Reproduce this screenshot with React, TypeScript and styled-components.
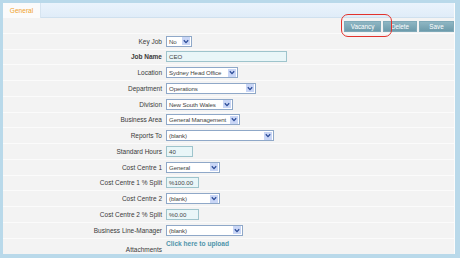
import styled, { createGlobalStyle } from "styled-components";

const GlobalStyle = createGlobalStyle`
  html, body {
    margin: 0;
    padding: 0;
    background: #b9d9ea;
  }
  body {
    font-family: "Liberation Sans", Arial, sans-serif;
  }
`;

const Frame = styled.div`
  width: 460px;
  height: 258px;
  box-sizing: border-box;
  padding: 3px 5px 4px 3px;
  background: #b9d9ea;
  position: relative;
`;

const Panel = styled.div`
  height: 100%;
  background: #f3f3f3;
  border-right: 1px solid #fcfcfc;
  box-sizing: border-box;
  display: flex;
  flex-direction: column;
  overflow: hidden;
`;

const TabStrip = styled.div`
  height: 14px;
  display: flex;
  background: linear-gradient(#eaf3fc, #e0ecf8);
  border-bottom: 1px solid #cfe0ee;
`;

const Tab = styled.div`
  width: 37px;
  height: 15px;
  background: #fbfbfb;
  color: #f0a22c;
  font-size: 6.6px;
  display: flex;
  align-items: center;
  justify-content: center;
  border-right: 1px solid #d6e4f0;
`;

const ButtonBar = styled.div`
  height: 15px;
  display: flex;
  justify-content: flex-end;
  align-items: flex-end;
  gap: 2px;
`;

const Button = styled.div<{ $w: number }>`
  width: ${(p) => p.$w}px;
  height: 9px;
  background: linear-gradient(#8fb6c3, #6d9bab);
  color: #fff;
  font-size: 6.3px;
  display: flex;
  align-items: center;
  justify-content: center;
  border: 1px solid #7fa9b8;
  box-sizing: content-box;
`;

const Rows = styled.div`
  display: flex;
  flex-direction: column;
  margin-top: 1px;
`;

const Row = styled.div<{ $tall?: boolean }>`
  display: grid;
  grid-template-columns: 159px 1fr;
  column-gap: 4px;
  height: ${(p) => (p.$tall ? "16.5px" : "15.75px")};
  align-items: center;
  border-top: 1px solid #fbfbfb;
  box-sizing: border-box;
`;

const Label = styled.div<{ $bold?: boolean; $bottom?: boolean }>`
  text-align: right;
  font-size: 6.5px;
  color: #3a3a3a;
  font-weight: ${(p) => (p.$bold ? "bold" : "normal")};
  align-self: ${(p) => (p.$bottom ? "end" : "center")};
  padding-bottom: ${(p) => (p.$bottom ? "1px" : "0")};
`;

const SelectBox = styled.div<{ $w: number }>`
  width: ${(p) => p.$w}px;
  height: 11px;
  box-sizing: border-box;
  border: 1px solid #8fa8c8;
  background: #fff;
  display: flex;
  align-items: center;
  justify-content: space-between;
  padding-left: 2px;
  font-size: 6.1px;
  letter-spacing: -0.1px;
  color: #444;
  white-space: nowrap;
  overflow: hidden;
`;

const Arrow = styled.div`
  flex: none;
  width: 8px;
  height: 8px;
  margin-right: 1px;
  background: #c9d6f6;
  display: flex;
  align-items: center;
  justify-content: center;
`;

const TextBox = styled.div<{ $w: number }>`
  width: ${(p) => p.$w}px;
  height: 11px;
  box-sizing: border-box;
  border: 1px solid #9ec4cc;
  background: #e9f6f8;
  display: flex;
  align-items: center;
  padding-left: 2px;
  font-size: 6.1px;
  color: #444;
`;

const UploadLink = styled.div`
  align-self: start;
  color: #4f95ab;
  font-weight: bold;
  font-size: 6.6px;
  padding-top: 1px;
`;

const Highlight = styled.div`
  position: absolute;
  left: 341px;
  top: 14px;
  width: 51px;
  height: 23px;
  box-sizing: border-box;
  border: 1.5px solid #e2322c;
  border-radius: 7px;
`;

const Chevron = () => (
  <svg width="6" height="5" viewBox="0 0 6 5">
    <path d="M0.8 1.2 L3 3.6 L5.2 1.2" fill="none" stroke="#2c4c98" strokeWidth="1.3" />
  </svg>
);

type Field = {
  label: string;
  kind: "select" | "text";
  value: string;
  w: number;
  bold?: boolean;
};

const fields: Field[] = [
  { label: "Key Job", kind: "select", value: "No", w: 26 },
  { label: "Job Name", kind: "text", value: "CEO", w: 121, bold: true },
  { label: "Location", kind: "select", value: "Sydney Head Office", w: 72 },
  { label: "Department", kind: "select", value: "Operations", w: 90 },
  { label: "Division", kind: "select", value: "New South Wales", w: 67 },
  { label: "Business Area", kind: "select", value: "General Management", w: 74 },
  { label: "Reports To", kind: "select", value: "(blank)", w: 108 },
  { label: "Standard Hours", kind: "text", value: "40", w: 27 },
  { label: "Cost Centre 1", kind: "select", value: "General", w: 54 },
  { label: "Cost Centre 1 % Split", kind: "text", value: "%100.00", w: 33 },
  { label: "Cost Centre 2", kind: "select", value: "(blank)", w: 54 },
  { label: "Cost Centre 2 % Split", kind: "text", value: "%0.00", w: 33 },
  { label: "Business Line-Manager", kind: "select", value: "(blank)", w: 77 },
];

export default function App() {
  return (
    <>
      <GlobalStyle />
      <Frame>
        <Panel>
          <TabStrip>
            <Tab>General</Tab>
          </TabStrip>
          <ButtonBar>
            <Button $w={35}>Vacancy</Button>
            <Button $w={32}>Delete</Button>
            <Button $w={33}>Save</Button>
          </ButtonBar>
          <Rows>
            {fields.map((f) => (
              <Row key={f.label}>
                <Label $bold={f.bold}>{f.label}</Label>
                <div>
                  {f.kind === "select" ? (
                    <SelectBox $w={f.w}>
                      <span>{f.value}</span>
                      <Arrow>
                        <Chevron />
                      </Arrow>
                    </SelectBox>
                  ) : (
                    <TextBox $w={f.w}>{f.value}</TextBox>
                  )}
                </div>
              </Row>
            ))}
            <Row $tall>
              <Label $bottom>Attachments</Label>
              <UploadLink>Click here to upload</UploadLink>
            </Row>
          </Rows>
        </Panel>
        <Highlight />
      </Frame>
    </>
  );
}
